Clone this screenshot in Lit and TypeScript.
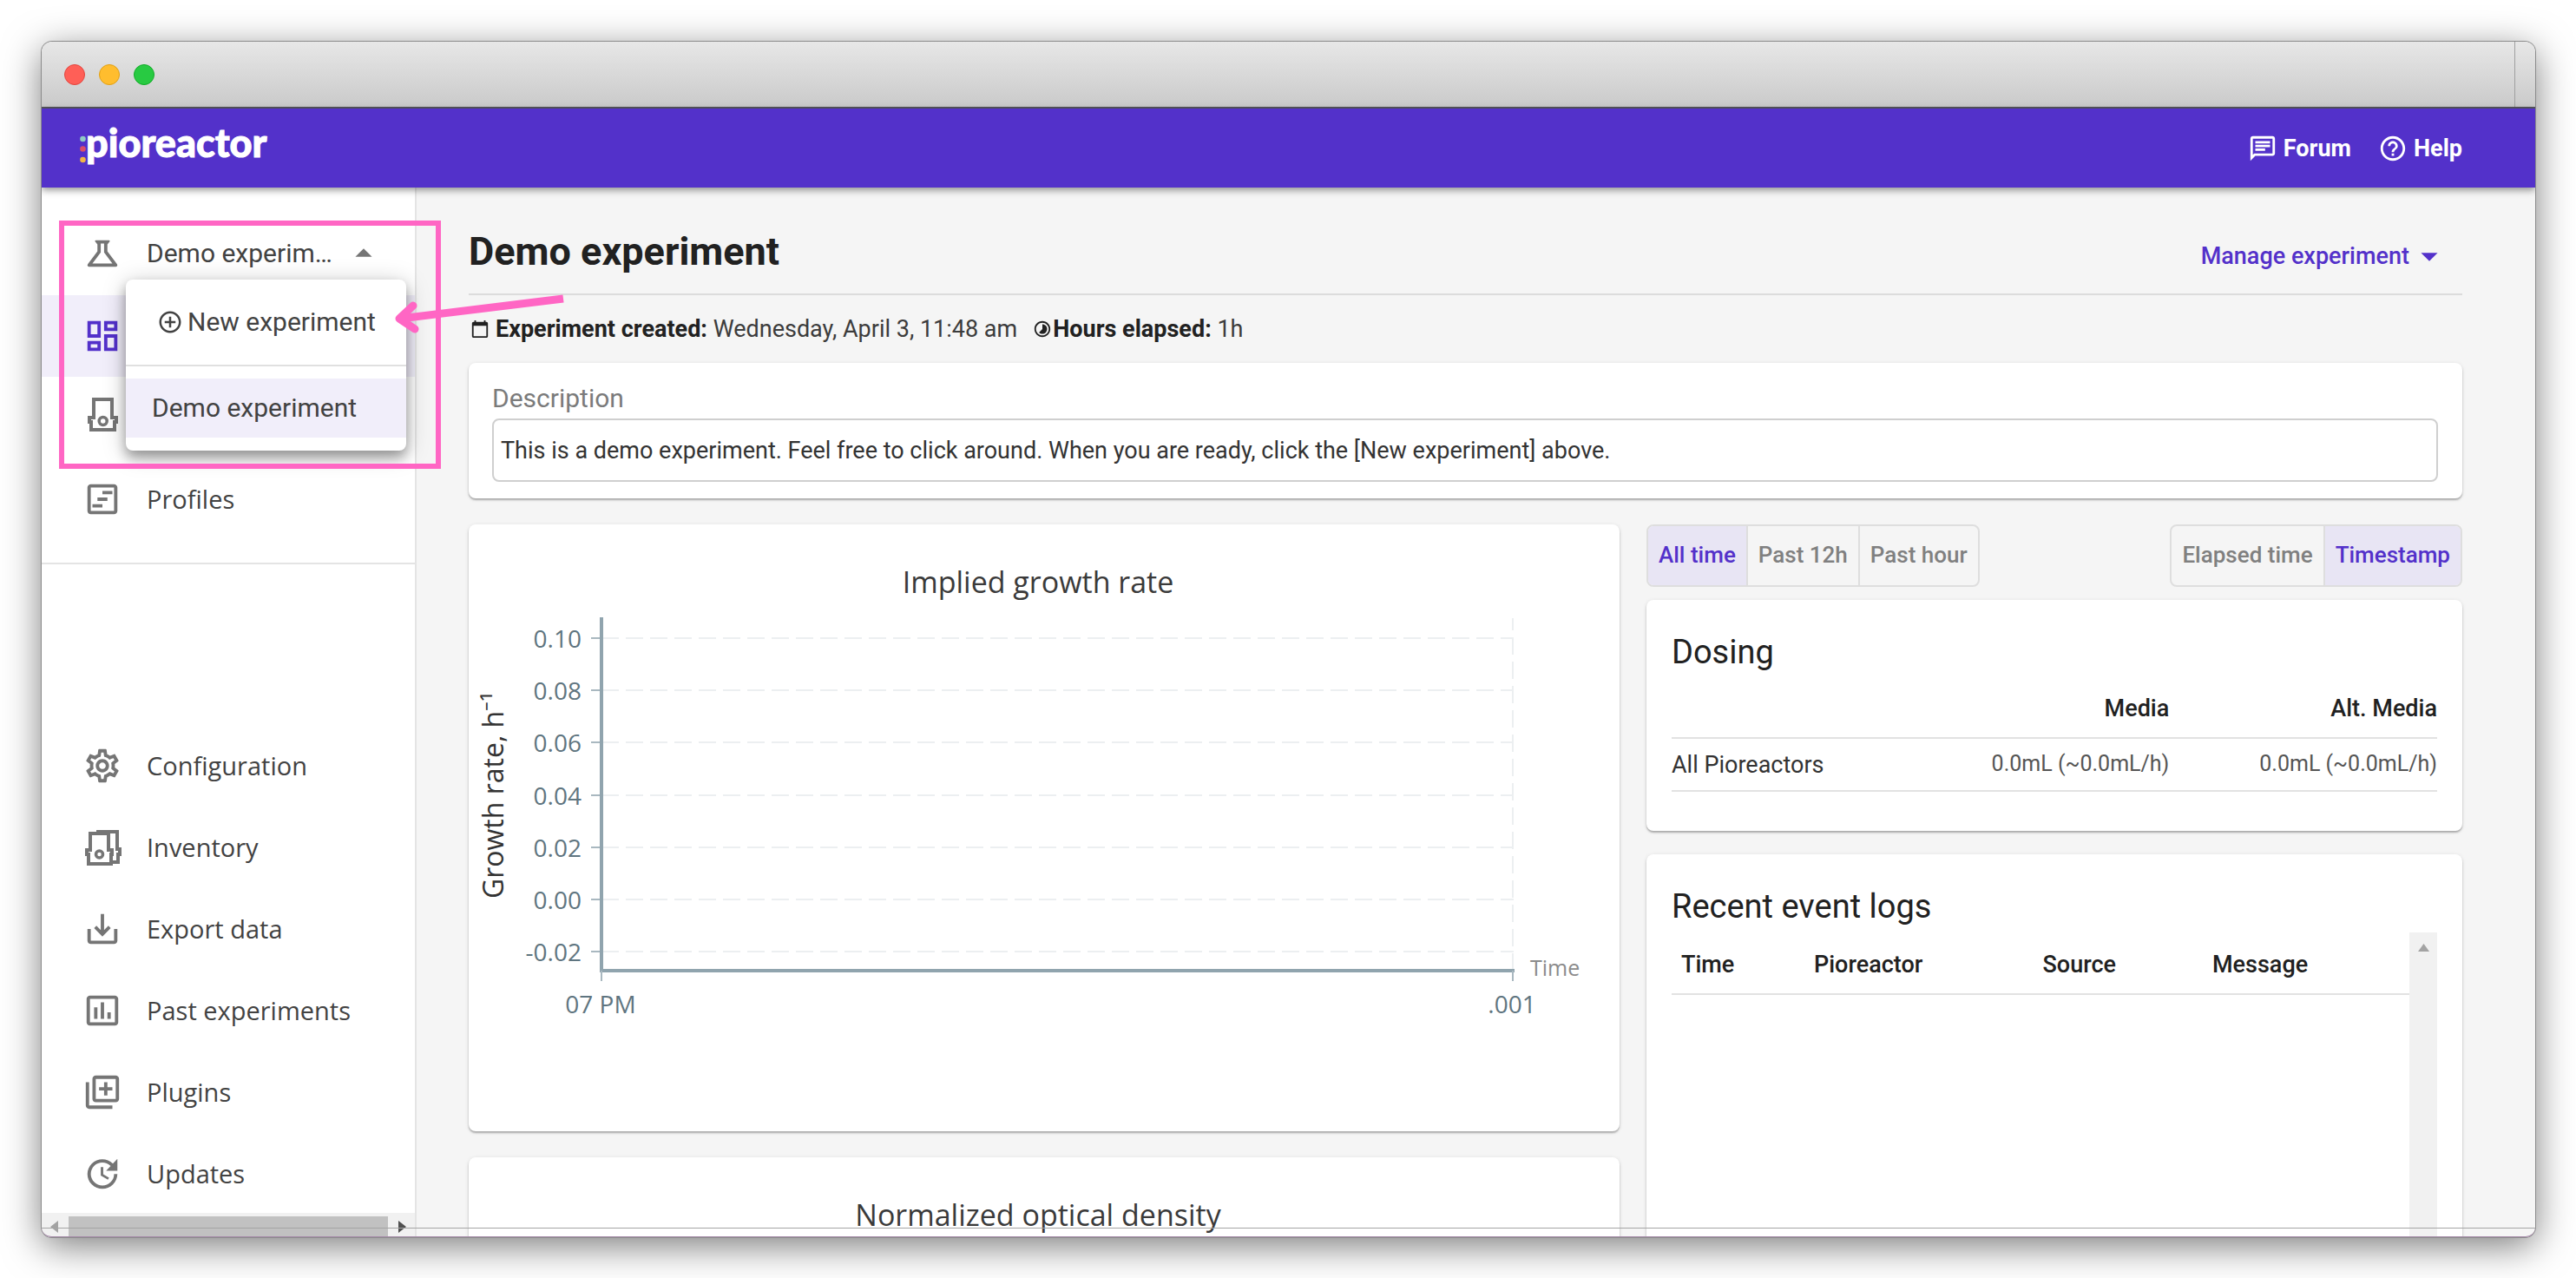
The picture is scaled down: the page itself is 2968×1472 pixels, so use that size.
import { LitElement, html, css, svg, nothing } from "lit";
import { customElement, property, state } from "lit/decorators.js";
import { classMap } from "lit/directives/class-map.js";

const ICONS: Record<string, string> = {
  science:
    "M13,11.33L18,18H6l5-6.67V6h2 M15.96,4H8.04C7.62,4,7.39,4.48,7.65,4.81L9,6.5v4.17L3.2,18.4C2.71,19.06,3.18,20,4,20h16c0.82,0,1.29-0.94,0.8-1.6L15,10.67V6.5l1.35-1.69C16.61,4.48,16.38,4,15.96,4L15.96,4z",
  dashboard:
    "M19 5v2h-4V5h4M9 5v6H5V5h4m10 8v6h-4v-6h4M9 17v2H5v-2h4M21 3h-8v6h8V3zM11 3H3v10h8V3zm10 8h-8v10h8V11zm-10 4H3v6h8v-6z",
  profiles:
    "M19 5v14H5V5h14m0-2H5c-1.1 0-2 .9-2 2v14c0 1.1.9 2 2 2h14c1.1 0 2-.9 2-2V5c0-1.1-.9-2-2-2zM12 7h6v2h-6zM9 11h6v2H9zM6 15h6v2H6z",
  settings:
    "M19.43 12.98c.04-.32.07-.64.07-.98 0-.34-.03-.66-.07-.98l2.11-1.65c.19-.15.24-.42.12-.64l-2-3.46c-.09-.16-.26-.25-.44-.25-.06 0-.12.01-.17.03l-2.49 1c-.52-.4-1.08-.73-1.69-.98l-.38-2.65C14.46 2.18 14.25 2 14 2h-4c-.25 0-.46.18-.49.42l-.38 2.65c-.61.25-1.17.59-1.69.98l-2.49-1c-.06-.02-.12-.03-.18-.03-.17 0-.34.09-.43.25l-2 3.46c-.13.22-.07.49.12.64l2.11 1.65c-.04.32-.07.65-.07.98 0 .33.03.66.07.98l-2.11 1.65c-.19.15-.24.42-.12.64l2 3.46c.09.16.26.25.44.25.06 0 .12-.01.17-.03l2.49-1c.52.4 1.08.73 1.69.98l.38 2.65c.03.24.24.42.49.42h4c.25 0 .46-.18.49-.42l.38-2.65c.61-.25 1.17-.59 1.69-.98l2.49 1c.06.02.12.03.18.03.17 0 .34-.09.43-.25l2-3.46c.12-.22.07-.49-.12-.64l-2.11-1.65zm-1.98-1.71c.04.31.05.52.05.73 0 .21-.02.43-.05.73l-.14 1.13.89.7 1.08.84-.7 1.21-1.27-.51-1.04-.42-.9.68c-.43.32-.84.56-1.25.73l-1.06.43-.16 1.13-.2 1.35h-1.4l-.19-1.35-.16-1.13-1.06-.43c-.43-.18-.83-.41-1.23-.71l-.91-.7-1.06.43-1.27.51-.7-1.21 1.08-.84.89-.7-.14-1.13c-.03-.31-.05-.54-.05-.74s.02-.43.05-.73l.14-1.13-.89-.7-1.08-.84.7-1.21 1.27.51 1.04.42.9-.68c.43-.32.84-.56 1.25-.73l1.06-.43.16-1.13.2-1.35h1.39l.19 1.35.16 1.13 1.06.43c.43.18.83.41 1.23.71l.91.7 1.06-.43 1.27-.51.7 1.21-1.07.85-.89.7.14 1.13zM12 8c-2.21 0-4 1.79-4 4s1.79 4 4 4 4-1.79 4-4-1.79-4-4-4zm0 6c-1.1 0-2-.9-2-2s.9-2 2-2 2 .9 2 2-.9 2-2 2z",
  export:
    "M19 12v7H5v-7H3v7c0 1.1.9 2 2 2h14c1.1 0 2-.9 2-2v-7h-2zm-6 .67l2.59-2.58L17 11.5l-5 5-5-5 1.41-1.41L11 12.67V3h2z",
  chart:
    "M9 17H7v-7h2v7zm4 0h-2V7h2v10zm4 0h-2v-4h2v4zm2.5 2.1h-15V5h15v14.1zm0-16.1h-15c-1.1 0-2 .9-2 2v14c0 1.1.9 2 2 2h15c1.1 0 2-.9 2-2V5c0-1.1-.9-2-2-2z",
  plugins:
    "M4 6H2v14c0 1.1.9 2 2 2h14v-2H4V6zm16-4H8c-1.1 0-2 .9-2 2v12c0 1.1.9 2 2 2h12c1.1 0 2-.9 2-2V4c0-1.1-.9-2-2-2zm0 14H8V4h12v12zm-7-2h2v-3h3V9h-3V6h-2v3h-3v2h3z",
  update:
    "M21 10.12h-6.78l2.74-2.82c-2.73-2.7-7.15-2.8-9.88-.1-2.73 2.71-2.73 7.08 0 9.79s7.15 2.71 9.88 0C18.32 15.65 19 14.08 19 12.1h2c0 1.98-.88 4.55-2.64 6.29-3.51 3.48-9.21 3.48-12.72 0-3.5-3.47-3.53-9.11-.02-12.58s9.14-3.47 12.65 0L21 3v7.12zM12.5 8v4.25l3.5 2.08-.72 1.21L11 13V8h1.5z",
  add: "M13 7h-2v4H7v2h4v4h2v-4h4v-2h-4V7zm-1-5C6.48 2 2 6.48 2 12s4.48 10 10 10 10-4.48 10-10S17.52 2 12 2zm0 18c-4.41 0-8-3.59-8-8s3.59-8 8-8 8 3.59 8 8-3.59 8-8 8z",
  forum:
    "M4 4h16v12H5.17L4 17.17V4m0-2c-1.1 0-1.99.9-1.99 2L2 22l4-4h14c1.1 0 2-.9 2-2V4c0-1.1-.9-2-2-2H4zm2 10h8v2H6v-2zm0-3h12v2H6V9zm0-3h12v2H6V6z",
  help: "M11 18h2v-2h-2v2zm1-16C6.48 2 2 6.48 2 12s4.48 10 10 10 10-4.48 10-10S17.52 2 12 2zm0 18c-4.41 0-8-3.59-8-8s3.59-8 8-8 8 3.59 8 8-3.59 8-8 8zm0-14c-2.21 0-4 1.79-4 4h2c0-1.1.9-2 2-2s2 .9 2 2c0 2-3 1.75-3 5h2c0-2.25 3-2.5 3-5 0-2.21-1.79-4-4-4z",
  calendar:
    "M20 3h-1V1h-2v2H7V1H5v2H4c-1.1 0-2 .9-2 2v16c0 1.1.9 2 2 2h16c1.1 0 2-.9 2-2V5c0-1.1-.9-2-2-2zm0 18H4V8h16v13z",
  timelapse:
    "M16.24 7.76C15.07 6.59 13.54 6 12 6v6l-4.24 4.24c2.34 2.34 6.14 2.34 8.49 0 2.34-2.34 2.34-6.14-.01-8.48zM12 2C6.48 2 2 6.48 2 12s4.48 10 10 10 10-4.48 10-10S17.52 2 12 2zm0 18c-4.42 0-8-3.58-8-8s3.58-8 8-8 8 3.58 8 8-3.58 8-8 8z",
  caretUp: "M7 14l5-5 5 5z",
  caretDown: "M7 10l5 5 5-5z",
};

const icon = (name: string, size: number) => html`
  <svg class="icon" width=${size} height=${size} viewBox="0 0 24 24" aria-hidden="true">
    <path d=${ICONS[name]} fill="currentColor"></path>
  </svg>
`;

const reactorIcon = html`
  <svg class="icon" width="46" height="46" viewBox="0 0 46 46" aria-hidden="true" fill="none" stroke="currentColor">
    <path d="M13 23V2H34V23H39V28H37V37H10V28H8V23Z" stroke-width="4"></path>
    <circle cx="23.7" cy="27" r="4.5" stroke-width="3.5"></circle>
  </svg>
`;

const inventoryIcon = html`
  <svg class="icon" width="46" height="46" viewBox="0 0 46 46" aria-hidden="true" fill="none" stroke="currentColor">
    <path d="M18 7V5H40V25H43V31H41V40H33" stroke-width="4"></path>
    <path d="M9 26V7H30V26H34V31H33V42H7V31H5V26Z" stroke-width="4"></path>
    <circle cx="19.5" cy="31" r="4" stroke-width="3.5"></circle>
  </svg>
`;

@customElement("line-chart")
class LineChart extends LitElement {
  @property() heading = "";
  @property() axis = "";
  @property({ attribute: false }) ticks: string[] = [];

  static styles = css`
    :host {
      display: block;
      background: #fff;
      border-radius: 8px;
      box-shadow: 0 2px 2px rgba(0, 0, 0, 0.26), 0 1px 5px rgba(0, 0, 0, 0.1);
    }
    .plot {
      display: block;
      width: 100%;
      height: auto;
      font-family: "Open Sans", "Noto Sans", sans-serif;
    }
    .heading { font-size: 34px; fill: #3a3a3a; text-anchor: middle; }
    .axis { font-size: 32px; fill: #333; text-anchor: middle; }
    .tick { font-size: 28px; fill: #5f7580; }
    .end { text-anchor: end; }
    .mid { text-anchor: middle; }
    .unit { font-size: 25px; fill: #8b8b8b; }
    .grid { stroke: #eceff1; stroke-width: 2; stroke-dasharray: 20 8; }
    .mark { stroke: #a9b8c0; stroke-width: 2; }
    .line { stroke: #90a4ae; stroke-width: 4; fill: none; }
  `;

  private plot() {
    const y = (i: number) => Math.round(131 + (i * 361) / (this.ticks.length - 1));
    return svg`
      <text class="axis" transform="translate(40 312) rotate(-90)">${this.axis}</text>
      ${this.ticks.map(
        (t, i) => svg`
          <text class="tick end" x="130" y=${y(i) + 11}>${t}</text>
          <line class="mark" x1="141" x2="152" y1=${y(i)} y2=${y(i)}></line>
          <line class="grid" x1="153" x2="1204" y1=${y(i)} y2=${y(i)}></line>`
      )}
      <line class="grid" x1="1203" x2="1203" y1="514" y2="108"></line>
      <path class="line" d="M153 107V514H1205"></path>
      <line class="mark" x1="153" x2="153" y1="514" y2="526"></line>
      <line class="mark" x1="1203" x2="1203" y1="514" y2="526"></line>
      <text class="tick mid" x="152" y="563">07 PM</text>
      <text class="tick mid" x="1202" y="563">.001</text>
      <text class="unit" x="1223" y="520">Time</text>
    `;
  }

  render() {
    return html`
      <svg class="plot" viewBox="0 0 1326 699" role="img" aria-label=${this.heading}>
        <text class="heading" x="656" y="79">${this.heading}</text>
        ${this.ticks.length ? this.plot() : nothing}
      </svg>
    `;
  }
}

@customElement("app-root")
class AppRoot extends LitElement {
  @state() private menuOpen = true;
  @state() private range = "All time";
  @state() private scale = "Timestamp";

  static styles = css`
    :host {
      display: block;
      box-sizing: border-box;
      height: 100vh;
      padding: 48px 47px 47px 48px;
      overflow: hidden;
      background: #fff;
      color: #212121;
      font: 27px/36px Roboto, "Liberation Sans", sans-serif;
    }
    *, *::before, *::after { box-sizing: border-box; }
    button, input { font: inherit; color: inherit; margin: 0; }
    button { border: 0; padding: 0; background: none; cursor: pointer; }
    a { color: inherit; text-decoration: none; }
    h1, h2, ul { margin: 0; padding: 0; font-weight: inherit; list-style: none; }
    .icon { display: block; flex: none; }

    .window {
      position: relative;
      display: flex;
      flex-direction: column;
      height: 100%;
      border-radius: 12px;
      box-shadow: 0 0 0 1px #8c8c8c, 0 10px 44px rgba(0, 0, 0, 0.52);
    }
    .clip {
      display: flex;
      flex-direction: column;
      flex: 1;
      min-height: 0;
      border-radius: 12px;
      overflow: hidden;
    }
    .titlebar {
      flex: none;
      display: flex;
      align-items: center;
      gap: 16px;
      height: 77px;
      padding-left: 26px;
      background: linear-gradient(#e7e7e7, #cacaca);
      border-bottom: 2px solid #56565e;
    }
    .light { width: 24px; height: 24px; border-radius: 50%; }
    .red { background: #ff5f57; border: 1px solid #e2463f; }
    .amber { background: #ffbd2e; border: 1px solid #e1a116; }
    .green { background: #28ca42; border: 1px solid #12ac28; }
    .seam { align-self: stretch; width: 24px; margin-left: auto; border-left: 1px solid #a0a0a0; }
    .window::after {
      content: "";
      position: absolute;
      left: 0;
      right: 0;
      bottom: 0;
      height: 11px;
      border-top: 1px solid #a4a4a4;
      border-bottom: 1px solid #a58aa8;
      border-radius: 0 0 12px 12px;
    }

    .topbar {
      flex: none;
      position: relative;
      z-index: 2;
      display: flex;
      align-items: center;
      gap: 31px;
      height: 91px;
      padding: 0 84px 0 44px;
      background: #5331ca;
      color: #fff;
      font-weight: 700;
      box-shadow: 0 3px 8px rgba(0, 0, 0, 0.42);
    }
    .logo {
      display: flex;
      align-items: center;
      margin-right: auto;
      padding-bottom: 14px;
      font: 900 45px/48px Lato, "Open Sans", sans-serif;
      -webkit-text-stroke: 1px #fff;
    }
    .dots { margin-top: 18px; }
    .toplink { display: flex; align-items: center; gap: 7px; }

    .body { display: flex; flex: 1; min-height: 0; }
    .sidebar {
      flex: none;
      position: relative;
      display: flex;
      flex-direction: column;
      width: 432px;
      padding-top: 30px;
      background: #fff;
      border-right: 2px solid #e4e4e4;
    }
    .row {
      display: flex;
      align-items: center;
      gap: 28px;
      width: 100%;
      height: 94px;
      padding-left: 47px;
      color: #424242;
      font: 29px/40px "Open Sans", "Noto Sans", sans-serif;
      text-align: left;
    }
    .row .icon { color: #757575; }
    .current { background: #f1eefa; color: #5331ca; }
    .current .icon { color: #5331ca; }
    .picker { font: 30px/40px Roboto, sans-serif; padding-bottom: 3px; }
    .picker .icon:last-child { margin-left: -15px; }
    .upper { padding-bottom: 26px; border-bottom: 2px solid #e4e4e4; }
    .lower { margin-top: auto; margin-bottom: -2px; }
    .hscroll {
      flex: none;
      display: flex;
      align-items: center;
      height: 28px;
      padding: 4px 10px 0;
      gap: 12px;
      background: #f1f1f1;
    }
    .thumb { flex: 1; align-self: stretch; background: #c1c1c1; }

    .menu {
      position: absolute;
      z-index: 3;
      left: 97px;
      top: 106px;
      width: 323px;
      padding-bottom: 15px;
      background: #fff;
      color: #424242;
      border-radius: 8px;
      box-shadow: 0 8px 14px rgba(0, 0, 0, 0.32), 0 4px 28px rgba(0, 0, 0, 0.22);
      font-size: 30px;
      line-height: 40px;
    }
    .item { display: flex; align-items: center; width: 100%; height: 68px; padding-left: 30px; text-align: left; }
    .create { gap: 5px; height: 100px; padding-left: 36px; border-bottom: 2px solid #e0e0e0; margin-bottom: 14px; }
    .chosen { background: #f1eefa; }

    .main { flex: 1; min-width: 0; padding: 25px 84px 0 60px; background: #f5f5f5; overflow: hidden; }
    .head {
      display: flex;
      align-items: center;
      justify-content: space-between;
      height: 99px;
      border-bottom: 2px solid #dcdcdc;
    }
    .title { font-size: 45px; line-height: 52px; font-weight: 700; }
    .manage { display: flex; align-items: center; margin-top: 10px; padding-right: 15px; color: #5331ca; font-weight: 500; }
    .meta { display: flex; align-items: center; height: 78px; gap: 18px; padding-left: 2px; color: #3c3c3c; }
    .fact { display: flex; align-items: center; gap: 7px; }
    .fact .icon { color: #212121; }
    .tight { gap: 1px; }
    .fact b { font-weight: 700; color: #212121; }
    .card {
      background: #fff;
      border-radius: 8px;
      box-shadow: 0 2px 2px rgba(0, 0, 0, 0.26), 0 1px 5px rgba(0, 0, 0, 0.1);
    }
    .about { display: flex; flex-direction: column; gap: 5px; padding: 23px 28px 19px 27px; }
    .about label { font-size: 30px; color: #7b7b7b; }
    .about input {
      width: 100%;
      height: 73px;
      padding: 0 8px;
      border: 2px solid #cfcfcf;
      border-radius: 8px;
      background: #fff;
      color: #333;
    }
    .columns { display: grid; grid-template-columns: 1326fr 940fr; gap: 31px; margin-top: 30px; }
    .charts { display: flex; flex-direction: column; gap: 30px; }
    .side { display: flex; flex-direction: column; }
    .toggles { display: flex; justify-content: space-between; margin-bottom: 15px; }
    .group { display: flex; height: 72px; border: 2px solid #dedede; border-radius: 8px; overflow: hidden; }
    .toggle { padding: 0 12px 2px; font-size: 26px; font-weight: 500; color: #808080; }
    .toggle + .toggle { border-left: 2px solid #dedede; }
    .toggle.on { background: #e8e5f4; color: #5331ca; }
    .panel { padding: 36px 29px 45px; }
    .panel h2 { font-size: 38px; line-height: 48px; }
    table { width: 100%; border-collapse: collapse; table-layout: fixed; }
    th { font-weight: 500; text-align: left; padding: 0; }
    td { padding: 0; }
    thead tr, tbody tr { border-bottom: 2px solid #e2e2e2; }
    .dosing { margin-top: 8px; }
    .dosing thead th { height: 67px; }
    .dosing tbody tr { height: 61px; }
    .dosing tbody th { font-weight: 400; color: #333; }
    .dosing td { font-size: 25px; color: #555; padding-bottom: 2px; }
    .dosing .num { width: 35%; text-align: right; }
    .logs { flex: 1; margin-top: 27px; padding-bottom: 0; display: flex; flex-direction: column; }
    .scroller { display: flex; flex: 1; margin-top: 6px; min-height: 440px; align-items: flex-start; }
    .logtable { flex: 1; width: auto; }
    .logtable th { height: 71px; padding: 3px 0 0 11px; }
    .c1 { width: 18%; }
    .c2 { width: 31%; }
    .c3 { width: 23%; }
    .vscroll { align-self: stretch; width: 32px; padding: 13px 0 0 10px; background: #f1f1f1; }

    .notes { position: absolute; left: 0; top: 0; z-index: 5; pointer-events: none; }
  `;

  private group(options: string[], chosen: string, pick: (v: string) => void, label: string) {
    return html`
      <div class="group" role="group" aria-label=${label}>
        ${options.map(
          (o) => html`<button
            class=${classMap({ toggle: true, on: o === chosen })}
            aria-pressed=${o === chosen ? "true" : "false"}
            @click=${() => pick(o)}
          >${o}</button>`
        )}
      </div>
    `;
  }

  // While the menu is open it covers the labels of the entries behind it, so those show only their icon.
  private link(glyph: unknown, text: string, current = false, covered = false) {
    return html`<li>
      <a class=${classMap({ row: true, current })} href="#" aria-label=${text} aria-current=${current ? "page" : nothing}
        >${glyph}${covered ? nothing : html`<span>${text}</span>`}</a>
    </li>`;
  }

  private sidebar() {
    return html`
      <nav class="sidebar">
        <ul class="upper">
          <li>
            <button
              class="row picker"
              aria-haspopup="menu"
              aria-expanded=${this.menuOpen ? "true" : "false"}
              @click=${() => (this.menuOpen = !this.menuOpen)}
            >${icon("science", 46)}<span>Demo experim…</span>${icon("caretUp", 46)}</button>
          </li>
          ${this.link(icon("dashboard", 46), "Overview", true, this.menuOpen)}
          ${this.link(reactorIcon, "Pioreactors", false, this.menuOpen)}
          ${this.link(icon("profiles", 46), "Profiles")}
        </ul>
        ${this.menuOpen
          ? html`<div class="menu" role="menu">
              <button class="item create" role="menuitem">${icon("add", 30)}New experiment</button>
              <button class="item chosen" role="menuitem">Demo experiment</button>
            </div>`
          : nothing}
        <ul class="lower">
          ${this.link(icon("settings", 46), "Configuration")}
          ${this.link(inventoryIcon, "Inventory")}
          ${this.link(icon("export", 46), "Export data")}
          ${this.link(icon("chart", 46), "Past experiments")}
          ${this.link(icon("plugins", 46), "Plugins")}
          ${this.link(icon("update", 46), "Updates")}
        </ul>
        <div class="hscroll">
          <svg class="icon" width="9" height="14" viewBox="0 0 9 14"><path d="M9 0V14L0 7Z" fill="#a3a3a3"></path></svg>
          <div class="thumb"></div>
          <svg class="icon" width="9" height="14" viewBox="0 0 9 14"><path d="M0 0V14L9 7Z" fill="#505050"></path></svg>
        </div>
      </nav>
    `;
  }

  private content() {
    return html`
      <main class="main">
        <div class="head">
          <h1 class="title">Demo experiment</h1>
          <button class="manage" aria-haspopup="menu">Manage experiment${icon("caretDown", 46)}</button>
        </div>
        <div class="meta">
          <div class="fact">${icon("calendar", 22)}<span><b>Experiment created:</b> Wednesday, April 3, 11:48 am</span></div>
          <div class="fact tight">${icon("timelapse", 22)}<span><b>Hours elapsed:</b> 1h</span></div>
        </div>
        <section class="card about">
          <label for="description">Description</label>
          <input
            id="description"
            type="text"
            value="This is a demo experiment. Feel free to click around. When you are ready, click the [New experiment] above."
          />
        </section>
        <div class="columns">
          <div class="charts">
            <line-chart
              heading="Implied growth rate"
              axis="Growth rate, h⁻¹"
              .ticks=${["0.10", "0.08", "0.06", "0.04", "0.02", "0.00", "-0.02"]}
            ></line-chart>
            <line-chart heading="Normalized optical density"></line-chart>
          </div>
          <div class="side">
            <div class="toggles">
              ${this.group(["All time", "Past 12h", "Past hour"], this.range, (v) => (this.range = v), "Range")}
              ${this.group(["Elapsed time", "Timestamp"], this.scale, (v) => (this.scale = v), "Time scale")}
            </div>
            <section class="card panel">
              <h2>Dosing</h2>
              <table class="dosing">
                <thead>
                  <tr><th></th><th class="num">Media</th><th class="num">Alt. Media</th></tr>
                </thead>
                <tbody>
                  <tr>
                    <th>All Pioreactors</th>
                    <td class="num">0.0mL (~0.0mL/h)</td>
                    <td class="num">0.0mL (~0.0mL/h)</td>
                  </tr>
                </tbody>
              </table>
            </section>
            <section class="card panel logs">
              <h2>Recent event logs</h2>
              <div class="scroller">
                <table class="logtable">
                  <thead>
                    <tr>
                      <th class="c1">Time</th><th class="c2">Pioreactor</th><th class="c3">Source</th><th>Message</th>
                    </tr>
                  </thead>
                </table>
                <div class="vscroll">
                  <svg class="icon" width="13" height="9" viewBox="0 0 13 9"><path d="M0 9H13L6.5 0Z" fill="#a3a3a3"></path></svg>
                </div>
              </div>
            </section>
          </div>
        </div>
      </main>
    `;
  }

  render() {
    return html`
      <div class="window">
        <div class="clip">
          <div class="titlebar">
            <span class="light red"></span><span class="light amber"></span><span class="light green"></span>
            <span class="seam"></span>
          </div>
          <header class="topbar">
            <div class="logo">
              <svg class="icon dots" width="7" height="34" viewBox="0 0 7 34" aria-hidden="true">
                <circle cx="3.5" cy="4" r="3.3" fill="#8fcbc4"></circle>
                <circle cx="3.5" cy="15.5" r="3.3" fill="#d9506a"></circle>
                <circle cx="3.5" cy="28" r="3.3" fill="#f2b544"></circle>
              </svg>
              <span>pioreactor</span>
            </div>
            <a class="toplink" href="#">${icon("forum", 34)}Forum</a>
            <a class="toplink" href="#">${icon("help", 34)}Help</a>
          </header>
          <div class="body">${this.sidebar()}${this.content()}</div>
        </div>
        <svg class="notes" width="620" height="500" viewBox="0 0 620 500" fill="none" stroke="#ff66c4" aria-hidden="true">
          <rect x="23" y="209" width="434" height="280" stroke-width="6"></rect>
          <path d="M601 296L413 319" stroke-width="9"></path>
          <path d="M428 304L412 319L430 331" stroke-width="9" stroke-linecap="round" stroke-linejoin="round"></path>
        </svg>
      </div>
    `;
  }
}
